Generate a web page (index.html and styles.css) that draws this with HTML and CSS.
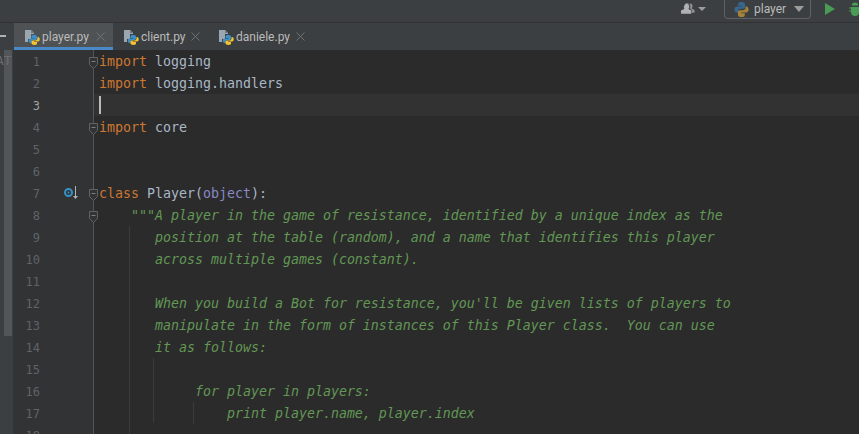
FILE: index.html
```html
<!DOCTYPE html>
<html lang="en">
<head>
<meta charset="utf-8">
<title>player.py</title>
<link rel="stylesheet" href="styles.css">
</head>
<body>
<svg class="defs" width="0" height="0" aria-hidden="true">
  <defs>
    <symbol id="pyfile" viewBox="0 0 16 16">
      <path d="M1 1h6l3 3v1H7v5H4v3H1z" fill="#9aa7b0"/>
      <path d="M7 1l3 3H7z" fill="#6f7a82"/>
      <path d="M10 6C8 6 7.500 6.700 7.500 7.700V9H10.500V9.500H6.500C5.300 9.500 4.800 10.500 4.800 11.800C4.800 13 5.300 14 6.500 14H7.500V12.700C7.500 11.700 8.300 11 9.300 11H11.500C12.300 11 13 10.400 13 9.500V7.700C13 6.700 12 6 10 6Z" fill="#3d8fc9"/>
      <path d="M10.500 16C12.500 16 13 15.300 13 14.300V13H10V12.500H14C15.200 12.500 15.700 11.500 15.700 10.200C15.700 9 15.200 8 14 8H13.500V9.300C13.500 10.300 12.700 11.500 11.700 11.500H9.200C8.200 11.500 7.500 12 7.500 12.800V14.300C7.500 15.300 8.500 16 10.500 16Z" fill="#f4c430"/>
    </symbol>
    <symbol id="foldtop" viewBox="0 0 9 12">
      <path d="M.5.500h8v7l-4 4-4-4z" fill="#313335" stroke="#606366"/>
      <path d="M2.500 4.500h4" stroke="#7a7d80"/>
    </symbol>
    <symbol id="closex" viewBox="0 0 9 9">
      <path d="M.5.500l8 8M8.500.500l-8 8" fill="none" stroke="#6f7375"/>
    </symbol>
  </defs>
</svg>

<header class="topbar">
  <svg class="user-icon" viewBox="0 0 16 12" width="15" height="12"><path d="M5 0h3v1.500l1 2-1 2.500 3 1.500v3.500H0V7.500L3.500 6 3 3.500 4 1.500z" fill="#afb1b3"/><path d="M9 .5h2.500l1 2.500-1 2.500 3 1.500v3h-3V7L9.500 5.500l.5-2z" fill="#8c8e90"/></svg>
  <span class="caret"></span>
  <span class="divider"></span>
  <div class="run-config">
    <svg class="py-icon" viewBox="0 0 16 16" width="15" height="15"><path d="M8 0C4.800 0 4.500 1.200 4.500 2.500V4H8.300V4.700H3C1.500 4.700 .500 6 .500 8S1.500 11.300 3 11.300H4.500V9.500C4.500 8.200 5.500 7.200 6.800 7.200H10C11 7.200 11.800 6.400 11.800 5.400V2.500C11.800 1 10.500 0 8 0Z" fill="#36688f"/><path d="M8 16C11.200 16 11.500 14.800 11.500 13.500V12H7.700V11.300H13C14.500 11.300 15.500 10 15.500 8S14.500 4.700 13 4.700H12.300V6.500C12.300 7.800 11 8.800 9.500 8.800H6.300C5 8.800 4.200 9.600 4.200 10.600V13.500C4.200 15 5.500 16 8 16Z" fill="#a5813a"/></svg>
    <span class="run-label">player</span>
    <span class="caret caret-lg"></span>
  </div>
  <svg class="run-icon" viewBox="0 0 10 12" width="10" height="12"><path d="M0 0l10 6-10 6z" fill="#499c54"/></svg>
  <svg class="bug-icon" viewBox="0 0 12 14" width="12" height="14"><path d="M3 2.500a3 2 0 0 1 6 0v1H3zM2 5h8v5a4 4 0 0 1-8 0z" fill="#499c54"/><path d="M0 6h2M10 6h2M0 9h2M10 9h2" stroke="#499c54"/></svg>
</header>

<nav class="tabbar">
  <span class="tab-handle"></span>
  <div class="tab tab-active">
    <svg class="file-icon" width="16" height="16"><use href="#pyfile"/></svg>
    <span class="tab-name">player.py</span>
    <svg class="tab-close" width="9" height="9"><use href="#closex"/></svg>
  </div>
  <div class="tab tab-client">
    <svg class="file-icon" width="16" height="16"><use href="#pyfile"/></svg>
    <span class="tab-name">client.py</span>
    <svg class="tab-close" width="9" height="9"><use href="#closex"/></svg>
  </div>
  <div class="tab tab-daniele">
    <svg class="file-icon" width="16" height="16"><use href="#pyfile"/></svg>
    <span class="tab-name">daniele.py</span>
    <svg class="tab-close" width="9" height="9"><use href="#closex"/></svg>
  </div>
</nav>

<main class="workspace">
  <aside class="side-strip">
    <div class="strip-rail"></div>
    <div class="strip-track"><span class="strip-thumb"></span></div>
    <span class="strip-text">AT</span>
  </aside>
  <div class="gutter">
    <div class="ln">1</div>
    <div class="ln">2</div>
    <div class="ln ln-current">3</div>
    <div class="ln">4</div>
    <div class="ln">5</div>
    <div class="ln">6</div>
    <div class="ln">7</div>
    <div class="ln">8</div>
    <div class="ln">9</div>
    <div class="ln">10</div>
    <div class="ln">11</div>
    <div class="ln">12</div>
    <div class="ln">13</div>
    <div class="ln">14</div>
    <div class="ln">15</div>
    <div class="ln">16</div>
    <div class="ln">17</div>
    <div class="ln">18</div>
    <svg class="fold fold-1" width="9" height="12"><use href="#foldtop"/></svg>
    <svg class="fold fold-4" width="9" height="12"><use href="#foldtop"/></svg>
    <svg class="fold fold-7" width="9" height="12"><use href="#foldtop"/></svg>
    <svg class="fold fold-8" width="9" height="12"><use href="#foldtop"/></svg>
    <svg class="override" viewBox="0 0 16 14" width="16" height="14"><circle cx="4.500" cy="6.500" r="3.500" fill="none" stroke="#3592c4" stroke-width="2"/><circle cx="4.500" cy="6.500" r="1" fill="#3592c4"/><path d="M11.500 0v10" stroke="#afb1b3"/><path d="M9 10h5l-2.500 3z" fill="#afb1b3"/></svg>
  </div>
  <div class="editor">
    <div class="line"><span class="kw">import</span> <span class="id">logging</span></div>
    <div class="line"><span class="kw">import</span> <span class="id">logging.handlers</span></div>
    <div class="line line-current"><span class="cursor"></span></div>
    <div class="line"><span class="kw">import</span> <span class="id">core</span></div>
    <div class="line"></div>
    <div class="line"></div>
    <div class="line"><span class="kw">class</span> <span class="id">Player(</span><span class="bi">object</span><span class="id">):</span></div>
    <div class="line doc">    """A player in the game of resistance, identified by a unique index as the</div>
    <div class="line doc">       position at the table (random), and a name that identifies this player</div>
    <div class="line doc">       across multiple games (constant).</div>
    <div class="line doc"></div>
    <div class="line doc">       When you build a Bot for resistance, you'll be given lists of players to</div>
    <div class="line doc">       manipulate in the form of instances of this Player class.  You can use</div>
    <div class="line doc">       it as follows:</div>
    <div class="line doc"></div>
    <div class="line doc">            for player in players:</div>
    <div class="line doc">                print player.name, player.index</div>
    <div class="line doc"></div>
    <span class="guide guide-a"></span>
    <span class="guide guide-b"></span>
    <span class="guide guide-c"></span>
  </div>
</main>
</body>
</html>
```
FILE: styles.css
```css
* { box-sizing: border-box; }
html, body { margin: 0; height: 100%; }
body {
  width: 859px;
  height: 434px;
  overflow: hidden;
  background: #2b2b2b;
  display: flex;
  flex-direction: column;
  font-family: Roboto, "Noto Sans", sans-serif;
}
.defs { position: absolute; }

.topbar {
  height: 23px;
  flex: none;
  background: #3c3f41;
  border-bottom: 1px solid #323232;
  display: flex;
  align-items: center;
  padding-left: 681px;
  padding-bottom: 4px;
}
.user-icon { flex: none; }
.caret {
  width: 0;
  height: 0;
  margin-left: 2px;
  border-left: 4px solid transparent;
  border-right: 4px solid transparent;
  border-top: 4px solid #9a9c9e;
}
.divider { width: 1px; height: 17px; background: #4b4e50; margin-left: 8px; }
.run-config {
  flex: none;
  align-self: flex-start;
  width: 87px;
  height: 19px;
  margin-left: 10px;
  padding: 0 9px;
  border: 1px solid #5e6163;
  border-top: none;
  border-radius: 0 0 4px 4px;
  display: flex;
  align-items: center;
  color: #bbbbbb;
  font-size: 12px;
}
.py-icon { flex: none; }
.run-label { margin-left: 5px; line-height: 1; }
.caret-lg { margin-left: 8px; border-left-width: 5px; border-right-width: 5px; border-top-width: 6px; }
.run-icon { margin-left: 14px; flex: none; }
.bug-icon { margin-left: 14px; flex: none; }

.tabbar {
  height: 27px;
  flex: none;
  background: #3c3f41;
  display: flex;
  align-items: stretch;
}
.tab-handle {
  width: 6px;
  height: 2px;
  background: #afb1b3;
  align-self: center;
  margin: 0 8px 2px 0;
}
.tab {
  flex: none;
  display: flex;
  align-items: center;
  padding-left: 10px;
  color: #bbbbbb;
  font-size: 12px;
}
.tab-active { width: 99px; background: #4e5254; box-shadow: inset 0 -3px 0 #4a88c7; }
.tab-client { width: 95px; }
.tab-daniele { width: 105px; }
.file-icon { flex: none; }
.tab-name { margin-left: 2px; }
.tab-close { flex: none; margin: 0 8px 0 auto; }

.workspace { flex: 1; display: flex; min-height: 0; overflow: hidden; }
.side-strip { width: 13px; flex: none; display: flex; position: relative; overflow: hidden; }
.strip-rail { width: 4px; background: #3c3f41; }
.strip-track { width: 9px; background: #3c3f41; position: relative; }
.strip-thumb { position: absolute; left: 0; right: 1px; top: 0; height: 286px; background: #535659; }
.strip-text {
  position: absolute;
  top: 0;
  left: -4px;
  font-family: "DejaVu Sans Mono", monospace;
  font-size: 13px;
  line-height: 22px;
  color: #6a6d70;
  white-space: pre;
}

.gutter {
  width: 81px;
  flex: none;
  background: #313335;
  border-right: 1px solid #555555;
  position: relative;
  font-family: "DejaVu Sans Mono", monospace;
  font-size: 12px;
  color: #606366;
}
.ln { height: 22px; line-height: 24px; width: 27px; text-align: right; }
.ln-current { color: #a4a3a3; }
.fold { position: absolute; left: 76px; }
.fold-1 { top: 7px; }
.fold-4 { top: 73px; }
.fold-7 { top: 139px; }
.fold-8 { top: 161px; }
.override { position: absolute; left: 51px; top: 136px; }

.editor {
  flex: 1;
  min-width: 0;
  position: relative;
  font-family: "DejaVu Sans Mono", monospace;
  font-size: 13.290px;
  color: #a9b7c6;
}
.line { height: 22px; line-height: 24px; padding-left: 5px; white-space: pre; }
.line-current { background: #323232; position: relative; }
.cursor { position: absolute; left: 5px; top: 2px; width: 2px; height: 18px; background: #bbbbbb; }
.kw { color: #cc7832; }
.id { color: #a9b7c6; }
.bi { color: #8888c6; }
.doc { color: #629755; font-style: italic; }
.guide { position: absolute; width: 1px; background: #3b3b3b; }
.guide-a { left: 35px; top: 176px; height: 208px; }
.guide-b { left: 59px; top: 308px; height: 65px; }
.guide-c { left: 99px; top: 352px; height: 22px; }
```
